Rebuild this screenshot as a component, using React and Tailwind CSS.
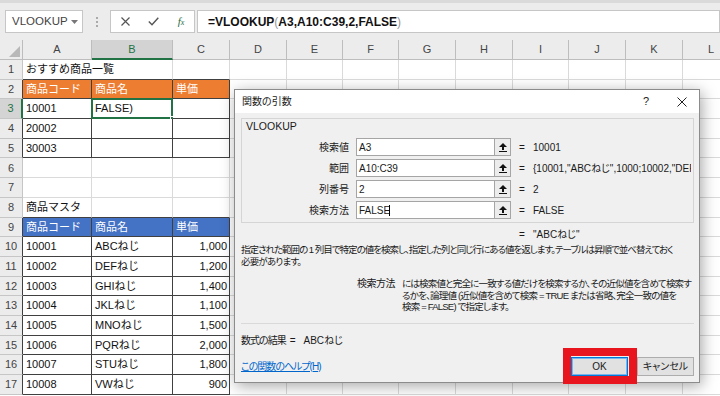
import React from "react";

const COLS =
  "grid grid-cols-[23px_69px_81px_57px_57px_56px_56px_57px_57px_56px_57px_57px_57px]";
const LETTERS = ["A", "B", "C", "D", "E", "F", "G", "H", "I", "J", "K", "L"];

const P = "border-r border-b border-[#dadada]";
const PD = "border-r border-b border-[#dadada] border-b-[#404040]";
const PDN = "border-b border-b-[#404040]";
const D = "border-r border-b border-[#404040] bg-white";
const O = "border-r border-b border-[#404040] bg-[#ed7d31] text-white";
const B = "border-r border-b border-[#404040] bg-[#4472c4] text-white";

const RH_N = "bg-[#ececec] border-r border-b border-[#c6c6c6] text-[#444]";
const RH_D = "bg-[#ececec] border-r border-b border-[#c6c6c6] border-r-[#404040] text-[#444]";
const RH_S = "bg-[#d4d4d4] border-b border-[#c6c6c6] border-r-2 border-r-[#217346] text-[#217346]";

const master = [
  ["10001", "ABCねじ", "1,000"],
  ["10002", "DEFねじ", "1,200"],
  ["10003", "GHIねじ", "1,400"],
  ["10004", "JKLねじ", "1,100"],
  ["10005", "MNOねじ", "1,500"],
  ["10006", "PQRねじ", "2,000"],
  ["10007", "STUねじ", "1,800"],
  ["10008", "VWねじ", "900"],
];

const rows = [
  { n: 1, h: RH_N, c: [{ k: PDN, t: "おすすめ商品一覧" }, { k: PD }, { k: PD }] },
  { n: 2, h: RH_D, c: [{ k: O, t: "商品コード" }, { k: O, t: "商品名" }, { k: O, t: "単価" }] },
  { n: 3, h: RH_S, c: [{ k: D, t: "10001" }, { k: D, t: "FALSE)", sel: true }, { k: D }] },
  { n: 4, h: RH_D, c: [{ k: D, t: "20002" }, { k: D }, { k: D }] },
  { n: 5, h: RH_D, c: [{ k: D, t: "30003" }, { k: D }, { k: D }] },
  { n: 6, h: RH_N, c: [{ k: P }, { k: P }, { k: P }] },
  { n: 7, h: RH_N, c: [{ k: P }, { k: P }, { k: P }] },
  { n: 8, h: RH_N, c: [{ k: PD, t: "商品マスタ" }, { k: PD }, { k: PD }] },
  { n: 9, h: RH_D, c: [{ k: B, t: "商品コード" }, { k: B, t: "商品名" }, { k: B, t: "単価" }] },
  ...master.map((m, i) => ({
    n: 10 + i,
    h: RH_D,
    c: [{ k: D, t: m[0] }, { k: D, t: m[1] }, { k: D, t: m[2], r: true }],
  })),
];

function FormulaBar() {
  return (
    <div className="h-[40px] bg-[#ececec] border-t-[3px] border-[#dadada] flex items-start pt-[7px]">
      <div className="shrink-0 ml-[5px] w-[78px] h-[23px] bg-white border border-[#c6c6c6] flex items-center pl-[6px] pr-[4px] text-[11.5px] text-[#444]">
        <span>VLOOKUP</span>
        <svg className="ml-auto" width="7" height="4" viewBox="0 0 7 4">
          <polygon points="0,0 7,0 3.5,4" fill="#777" />
        </svg>
      </div>
      <div className="shrink-0 w-[27px] h-[23px] flex flex-col items-center justify-center gap-[2px]">
        <div className="w-[2px] h-[2px] bg-[#aaa]" />
        <div className="w-[2px] h-[2px] bg-[#aaa]" />
        <div className="w-[2px] h-[2px] bg-[#aaa]" />
      </div>
      <div className="shrink-0 w-[85px] h-[23px] bg-white border border-[#c6c6c6] grid grid-cols-[28px_28px_28px] items-center justify-items-center">
        <svg width="9" height="9" viewBox="0 0 9 9">
          <path d="M0.5 0.5 L8.5 8.5 M8.5 0.5 L0.5 8.5" stroke="#555" strokeWidth="1.2" />
        </svg>
        <svg width="11" height="9" viewBox="0 0 11 9">
          <path d="M0.8 4.6 L4 7.8 L10.3 0.8" stroke="#555" strokeWidth="1.4" fill="none" />
        </svg>
        <span className="italic text-[#2a6b45] text-[11px] font-['Liberation_Serif',serif] leading-none">
          f<span className="text-[8px]">x</span>
        </span>
      </div>
      <div className="ml-[2px] flex-1 h-[23px] bg-white border border-[#c6c6c6] pl-[10px] flex items-center text-[12px] font-bold text-[#111]">
        <span>=VLOOKUP</span>
        <span className="font-normal text-[#999]">(</span>
        <span>A3,A10:C39,2,FALSE</span>
        <span className="font-normal text-[#999]">)</span>
      </div>
    </div>
  );
}

function HeaderRow() {
  return (
    <div className={`${COLS} h-[20px] text-[11px]`}>
      <div className="bg-[#ececec] border-r border-b border-[#bdbdbd] relative">
        <svg className="absolute right-[2px] bottom-[2px]" width="11" height="11" viewBox="0 0 11 11">
          <polygon points="11,0 11,11 0,11" fill="#b8b8b8" />
        </svg>
      </div>
      {LETTERS.map((l) =>
        l === "B" ? (
          <div
            key={l}
            className="bg-[#d3d3d3] border-r border-[#bdbdbd] border-b-2 border-b-[#217346] text-[#217346] flex items-center justify-center"
          >
            {l}
          </div>
        ) : (
          <div
            key={l}
            className="bg-[#ececec] border-r border-b border-[#bdbdbd] text-[#444] flex items-center justify-center"
          >
            {l}
          </div>
        )
      )}
    </div>
  );
}

function Sheet() {
  return (
    <div className="text-[11px] text-[#111]">
      <HeaderRow />
      {rows.map((row) => (
        <div key={row.n} className={`${COLS} h-[19.7px]`}>
          <div className={`${row.h} flex items-center justify-center`}>{row.n}</div>
          {row.c.map((c, i) => (
            <div
              key={i}
              className={`${c.k} relative flex items-center px-[3px] whitespace-nowrap ${
                c.r ? "justify-end pr-[2px]" : ""
              }`}
            >
              <span className="relative">{c.t}</span>
              {c.sel && (
                <>
                  <div className="absolute inset-[-1px] border-2 border-[#217346]" />
                  <div className="absolute right-[-4px] bottom-[-4px] w-[6px] h-[6px] bg-[#217346] border border-white" />
                </>
              )}
            </div>
          ))}
          {Array.from({ length: 9 }).map((_, i) => (
            <div key={"p" + i} className={P} />
          ))}
        </div>
      ))}
    </div>
  );
}

function RefIcon() {
  return (
    <svg width="8" height="9" viewBox="0 0 8 9">
      <path d="M4 0 L8 4 L5 4 L5 7 L3 7 L3 4 L0 4 Z" fill="#111" />
      <rect x="0" y="8" width="8" height="1" fill="#111" />
    </svg>
  );
}

const args = [
  ["検索値", "A3", "10001"],
  ["範囲", "A10:C39", '{10001,"ABCねじ",1000;10002,"DEF'],
  ["列番号", "2", "2"],
  ["検索方法", "FALSE", "FALSE"],
];

function Dialog() {
  return (
    <div className="absolute left-[234px] top-[89px] w-[466px] h-[294px] bg-[#f0f0f0] border border-[#8c8c8c] shadow-[2px_3px_14px_rgba(0,0,0,0.35)] flex flex-col text-[10px] text-[#1a1a1a] [font-feature-settings:'palt']">
      <div className="h-[23px] bg-white flex items-center pl-[7px] pr-[12px]">
        <span>関数の引数</span>
        <span className="ml-auto mr-[28px] text-[11px]">?</span>
        <svg width="10" height="10" viewBox="0 0 10 10">
          <path d="M0.5 0.5 L9.5 9.5 M9.5 0.5 L0.5 9.5" stroke="#222" strokeWidth="1" />
        </svg>
      </div>
      <div className="pl-[6px] pr-[5px] flex flex-col">
        <div className="mt-[5px] h-[105px] border border-[#d5d5d5] flex flex-col pl-[3px] pr-[2px]">
          <div className="mt-[1px] h-[12px] leading-[12px] pl-[1px] text-[10.5px]">VLOOKUP</div>
          <div className="mt-[6px] flex flex-col gap-[3px]">
            {args.map(([l, v, r], i) => (
              <div key={l} className="h-[18px] flex items-center">
                <div className="shrink-0 w-[104px] text-right">{l}</div>
                <div className="shrink-0 ml-[7px] w-[139px] h-[18px] bg-white border border-[#a5a5a5] flex items-center pl-[2px]">
                  {v}
                  {i === 3 && <span className="w-px h-[11px] bg-black ml-[-1px]" />}
                </div>
                <div className="shrink-0 -ml-px w-[17px] h-[18px] bg-[#ececec] border border-[#a5a5a5] flex items-center justify-center">
                  <RefIcon />
                </div>
                <span className="shrink-0 w-[22px] text-center">=</span>
                <span className="flex-1 min-w-0 overflow-hidden whitespace-nowrap">{r}</span>
              </div>
            ))}
          </div>
        </div>
        <div className="mt-[6px] h-[12px] leading-[12px] flex">
          <span className="shrink-0 w-[270px]" />
          <span className="shrink-0 w-[22px] text-center">=</span>
          <span>"ABCねじ"</span>
        </div>
        <div className="mt-[3px] leading-[11.5px] whitespace-nowrap text-[9.5px]">
          <div className="tracking-[-1px]">指定された範囲の 1 列目で特定の値を検索し、指定した列と同じ行にある値を返します。テーブルは昇順で並べ替えておく</div>
          <div className="tracking-[-0.8px]">必要があります。</div>
        </div>
        <div className="mt-[11px] flex leading-[11.5px] whitespace-nowrap">
          <div className="shrink-0 w-[154px] text-right tracking-[-0.5px]">検索方法</div>
          <div className="shrink-0 ml-[7px] tracking-[-0.8px] text-[9.5px]">
            <div>には検索値と完全に一致する値だけを検索するか、その近似値を含めて検索す</div>
            <div>るかを、論理値 (近似値を含めて検索 = TRUE または省略、完全一致の値を</div>
            <div>検索 = FALSE) で指定します。</div>
          </div>
        </div>
        <div className="mt-[10px] h-px bg-[#d9d9d9]" />
        <div className="mt-[11px] h-[12px] leading-[12px] flex">
          <span className="tracking-[-1px]">数式の結果</span>
          <span className="ml-[4px]">=</span>
          <span className="ml-[8px]">ABCねじ</span>
        </div>
        <div className="mt-[10px] h-[19px] flex items-center">
          <span className="text-[#0066cc] underline tracking-[-1px]">この関数のヘルプ(H)</span>
          <div className="shrink-0 ml-auto w-[57px] h-[19px] bg-[#e1e1e1] border border-[#0078d7] shadow-[inset_0_0_0_1px_#7ab4ec] flex items-center justify-center">
            OK
          </div>
          <div className="shrink-0 ml-[9px] w-[57px] h-[19px] bg-[#e1e1e1] border border-[#adadad] flex items-center justify-center">
            キャンセル
          </div>
        </div>
      </div>
    </div>
  );
}

export default function App() {
  return (
    <div className="relative w-[720px] h-[396px] overflow-hidden bg-white [font-family:'Liberation_Sans','Noto_Sans_CJK_JP',sans-serif]">
      <FormulaBar />
      <Sheet />
      <Dialog />
      <div className="absolute left-[563px] top-[348px] w-[74px] h-[36px] border-[8px] border-[#e8141e]" />
    </div>
  );
}
